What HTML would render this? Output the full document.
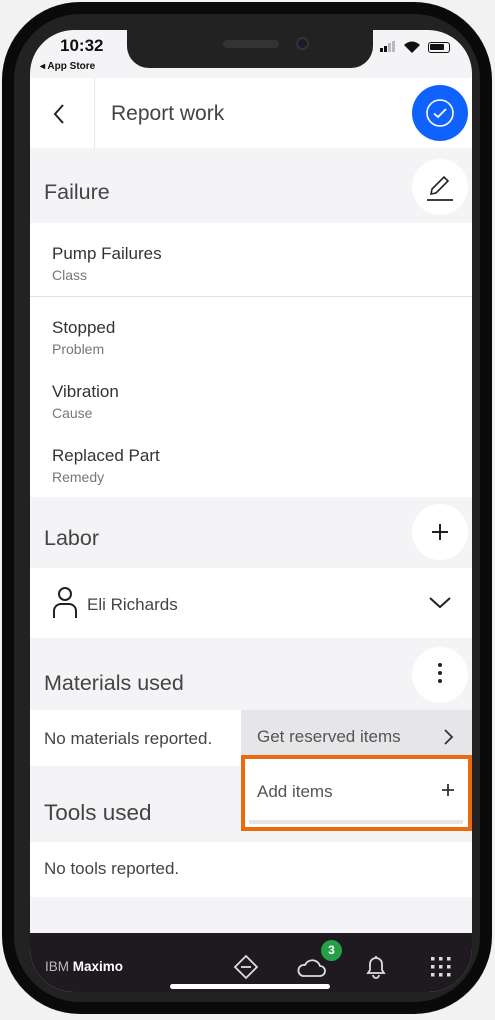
<!DOCTYPE html>
<html><head><meta charset="utf-8"><style>
*{margin:0;padding:0;box-sizing:border-box}
body{width:495px;height:1020px;background:#f2f2f2;position:relative;overflow:hidden;font-family:"Liberation Sans",sans-serif;color:#393939}
.abs{position:absolute}
.phone{left:2px;top:2px;width:490px;height:1012px;background:#0a0a0a;border-radius:78px}
.phone2{left:14px;top:14px;width:466px;height:988px;background:#222;border-radius:66px}
.screen{left:30px;top:30px;width:442px;height:962px;background:#f4f3f6;border-radius:44px;overflow:hidden}
.t{position:absolute;white-space:nowrap}
.circ{position:absolute;width:56px;height:56px;border-radius:50%;background:#fff}
</style></head><body>
<div class="abs phone"></div>
<div class="abs phone2"></div>
<div class="abs screen">
  <div class="t" style="left:30px;top:6px;font-size:17px;font-weight:bold;color:#111">10:32</div>
  <div class="t" style="left:10px;top:31px;font-size:10px;font-weight:bold;color:#111">◂ App Store</div>
  <div class="abs" style="left:97px;top:0;width:246px;height:38px;background:#222;border-radius:0 0 22px 22px"></div>
  <div class="abs" style="left:193px;top:10px;width:56px;height:8px;background:#333;border-radius:4px"></div>
  <div class="abs" style="left:266px;top:7px;width:13px;height:13px;background:#1a1a2a;border-radius:50%;border:2px solid #333"></div>
  <div class="abs" style="left:350px;top:18px;width:3px;height:4px;background:#111"></div>
  <div class="abs" style="left:354px;top:16px;width:3px;height:6px;background:#111"></div>
  <div class="abs" style="left:358px;top:13px;width:3px;height:9px;background:#bbb"></div>
  <div class="abs" style="left:362px;top:11px;width:3px;height:11px;background:#bbb"></div>
  <svg class="abs" style="left:373px;top:10px" width="18" height="14"><path d="M1 5 A11 11 0 0 1 17 5 L9 13 Z" fill="#111"/></svg>
  <div class="abs" style="left:398px;top:12px;width:22px;height:11px;border:1.5px solid #111;border-radius:3px"><div style="width:14px;height:6px;margin:1px;background:#111;border-radius:1px"></div></div>
  <div class="abs" style="left:0;top:48px;width:442px;height:70px;background:#fff"></div>
  <div class="abs" style="left:64px;top:48px;width:1px;height:70px;background:#e8e8e8"></div>
  <svg class="abs" style="left:20px;top:72px" width="20" height="24"><path d="M13 3 L5 12 L13 21" fill="none" stroke="#222" stroke-width="2"/></svg>
  <div class="t" style="left:81px;top:72px;font-size:21px;color:#444">Report work</div>
  <div class="abs" style="left:382px;top:55px;width:56px;height:56px;border-radius:50%;background:#0f62fe"></div>
  <svg class="abs" style="left:395px;top:68px" width="30" height="30"><circle cx="15" cy="15" r="13" fill="none" stroke="#fff" stroke-width="1.6"/><path d="M9 15.5 L13 19 L21 11" fill="none" stroke="#fff" stroke-width="1.8"/></svg>
  <div class="t" style="left:14px;top:150px;font-size:21.5px;color:#444">Failure</div>
  <div class="circ" style="left:382px;top:129px"></div>
  <svg class="abs" style="left:393px;top:140px" width="34" height="34"><path d="M8 24 L9 19 L21 7 L25 11 L13 23 Z" fill="none" stroke="#222" stroke-width="1.6"/><path d="M4 30 H30" stroke="#222" stroke-width="1.8"/></svg>
  <div class="abs" style="left:0;top:193px;width:442px;height:274px;background:#fff"></div>
  <div class="abs" style="left:0;top:266px;width:442px;height:1px;background:#e0e0e0"></div>
  <div class="t" style="left:22px;top:214px;font-size:17px;color:#333">Pump Failures</div>
  <div class="t" style="left:22px;top:237px;font-size:14px;color:#777">Class</div>
  <div class="t" style="left:22px;top:288px;font-size:17px;color:#333">Stopped</div>
  <div class="t" style="left:22px;top:311px;font-size:14px;color:#777">Problem</div>
  <div class="t" style="left:22px;top:352px;font-size:17px;color:#333">Vibration</div>
  <div class="t" style="left:22px;top:375px;font-size:14px;color:#777">Cause</div>
  <div class="t" style="left:22px;top:416px;font-size:17px;color:#333">Replaced Part</div>
  <div class="t" style="left:22px;top:439px;font-size:14px;color:#777">Remedy</div>
  <div class="t" style="left:14px;top:496px;font-size:21.5px;color:#444">Labor</div>
  <div class="circ" style="left:382px;top:474px"></div>
  <svg class="abs" style="left:400px;top:492px" width="20" height="20"><path d="M10 2 V18 M2 10 H18" stroke="#222" stroke-width="2"/></svg>
  <div class="abs" style="left:0;top:538px;width:442px;height:70px;background:#fff"></div>
  <svg class="abs" style="left:22px;top:556px" width="26" height="34"><circle cx="13" cy="8" r="6" fill="none" stroke="#222" stroke-width="2"/><path d="M2 32 V25 A7 7 0 0 1 9 18 H17 A7 7 0 0 1 24 25 V32" fill="none" stroke="#222" stroke-width="2"/></svg>
  <div class="t" style="left:57px;top:565px;font-size:17px;color:#444">Eli Richards</div>
  <svg class="abs" style="left:398px;top:565px" width="24" height="16"><path d="M2 3 L12 12 L22 3" fill="none" stroke="#222" stroke-width="2"/></svg>
  <div class="t" style="left:14px;top:641px;font-size:21.5px;color:#444">Materials used</div>
  <div class="circ" style="left:382px;top:617px"></div>
  <div class="abs" style="left:408px;top:633px;width:4px;height:4px;border-radius:50%;background:#222;box-shadow:0 8px 0 #222,0 16px 0 #222"></div>
  <div class="abs" style="left:0;top:680px;width:442px;height:56px;background:#fff"></div>
  <div class="t" style="left:14px;top:699px;font-size:17px;color:#444">No materials reported.</div>
  <div class="t" style="left:14px;top:770px;font-size:22.5px;color:#444">Tools used</div>
  <div class="abs" style="left:0;top:812px;width:442px;height:55px;background:#fff"></div>
  <div class="t" style="left:14px;top:829px;font-size:17px;color:#444">No tools reported.</div>
  <div class="abs" style="left:211px;top:680px;width:231px;height:45px;background:#e6e5e8"></div>
  <div class="t" style="left:227px;top:697px;font-size:17px;color:#555">Get reserved items</div>
  <svg class="abs" style="left:412px;top:698px" width="12" height="18"><path d="M3 2 L10 9 L3 16" fill="none" stroke="#333" stroke-width="1.8"/></svg>
  <div class="abs" style="left:211px;top:725px;width:231px;height:76px;background:#fff;border:4px solid #ea6b0f"></div>
  <div class="abs" style="left:219px;top:790px;width:214px;height:4px;background:#e6e6e6"></div>
  <div class="t" style="left:227px;top:752px;font-size:17px;color:#555">Add items</div>
  <svg class="abs" style="left:411px;top:753px" width="14" height="14"><path d="M7 1 V13 M1 7 H13" stroke="#333" stroke-width="1.8"/></svg>
  <div class="abs" style="left:0;top:903px;width:442px;height:60px;background:#1e1a20"></div>
  <div class="t" style="left:15px;top:929px;font-size:13.5px;color:#bbb">IBM <b style="color:#fff">Maximo</b></div>
  <svg class="abs" style="left:203px;top:924px" width="26" height="26"><path d="M13 2 L24 13 L13 24 L2 13 Z" fill="none" stroke="#ddd" stroke-width="1.8"/><path d="M8 13 H18" stroke="#ddd" stroke-width="1.8"/></svg>
  <svg class="abs" style="left:266px;top:926px" width="30" height="22"><path d="M7 20 H24 A5 5 0 0 0 24 10 A8 8 0 0 0 9 9 A5.5 5.5 0 0 0 7 20 Z" fill="none" stroke="#ddd" stroke-width="1.8"/></svg>
  <div class="abs" style="left:291px;top:910px;width:21px;height:21px;border-radius:50%;background:#24a148;color:#fff;font-size:12px;font-weight:bold;text-align:center;line-height:21px">3</div>
  <svg class="abs" style="left:334px;top:922px" width="24" height="28"><path d="M4 21 H20 L18 18 V12 A6 6 0 0 0 6 12 V18 Z" fill="none" stroke="#ddd" stroke-width="1.8"/><path d="M9 23 A3 3 0 0 0 15 23 M12 4 V6" stroke="#ddd" stroke-width="1.8" fill="none"/></svg>
  <svg class="abs" style="left:400px;top:926px" width="22" height="22" fill="#ddd"><rect x="1" y="1" width="3.5" height="3.5"/><rect x="9" y="1" width="3.5" height="3.5"/><rect x="17" y="1" width="3.5" height="3.5"/><rect x="1" y="9" width="3.5" height="3.5"/><rect x="9" y="9" width="3.5" height="3.5"/><rect x="17" y="9" width="3.5" height="3.5"/><rect x="1" y="17" width="3.5" height="3.5"/><rect x="9" y="17" width="3.5" height="3.5"/><rect x="17" y="17" width="3.5" height="3.5"/></svg>
  <div class="abs" style="left:140px;top:954px;width:160px;height:5px;border-radius:3px;background:#fff"></div>
</div>
</body></html>
